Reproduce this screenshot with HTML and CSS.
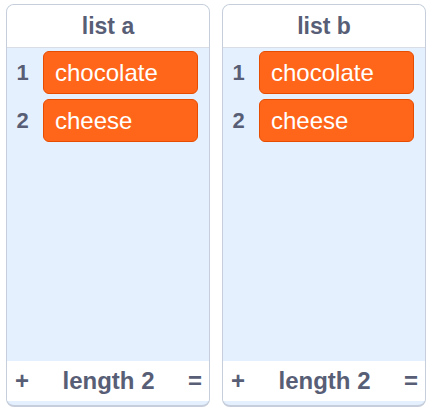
FILE: index.html
```html
<!DOCTYPE html>
<html>
<head>
<meta charset="utf-8">
<link rel="stylesheet" href="styles.css">
</head>
<body>
<div class="monitors">
  <div class="monitor">
    <div class="monitor-header">list a</div>
    <div class="monitor-body">
      <div class="row"><span class="idx">1</span><div class="item">chocolate</div></div>
      <div class="row"><span class="idx">2</span><div class="item">cheese</div></div>
    </div>
    <div class="monitor-footer">
      <span class="btn">+</span>
      <span class="len">length 2</span>
      <span class="btn">=</span>
    </div>
  </div>
  <div class="monitor">
    <div class="monitor-header">list b</div>
    <div class="monitor-body">
      <div class="row"><span class="idx">1</span><div class="item">chocolate</div></div>
      <div class="row"><span class="idx">2</span><div class="item">cheese</div></div>
    </div>
    <div class="monitor-footer">
      <span class="btn">+</span>
      <span class="len">length 2</span>
      <span class="btn">=</span>
    </div>
  </div>
</div>
</body>
</html>
```
FILE: styles.css
```css
* { box-sizing: border-box; }
html, body { margin: 0; padding: 0; background: #ffffff; }
body {
  font-family: "Liberation Sans", Arial, sans-serif;
  color: #575e75;
}
.monitors {
  display: flex;
  gap: 12px;
  padding: 4px 6px;
}
.monitor {
  width: 204px;
  height: 403px;
  border: 1px solid #c6cedb;
  border-bottom-width: 2px;
  border-radius: 8px;
  background: #e5f0ff;
  display: flex;
  flex-direction: column;
  overflow: hidden;
}
.monitor-header {
  height: 43px;
  flex: none;
  background: #ffffff;
  border-bottom: 1px solid #d9dde4;
  display: flex;
  align-items: center;
  justify-content: center;
  font-weight: bold;
  font-size: 23px;
  padding-top: 1px;
}
.monitor-body {
  flex: 1;
  display: flex;
  flex-direction: column;
  gap: 5px;
  padding: 3px 11px 0 0;
}
.row {
  display: flex;
  align-items: center;
  height: 43px;
}
.idx {
  width: 31px;
  text-align: center;
  font-weight: bold;
  font-size: 22px;
  margin-right: 5px;
  flex: none;
}
.item {
  flex: 1;
  height: 43px;
  background: #ff661a;
  border: 1px solid #e64d00;
  border-radius: 6px;
  color: #ffffff;
  font-size: 24px;
  display: flex;
  align-items: center;
  padding-left: 11px;
}
.monitor-footer {
  height: 40px;
  flex: none;
  margin-bottom: 4px;
  background: #ffffff;
  display: flex;
  align-items: center;
  justify-content: space-between;
  padding: 0 7px 0 8px;
  font-weight: bold;
}
.btn { font-size: 24px; width: 14px; text-align: center; }
.len { font-size: 24px; }
```
